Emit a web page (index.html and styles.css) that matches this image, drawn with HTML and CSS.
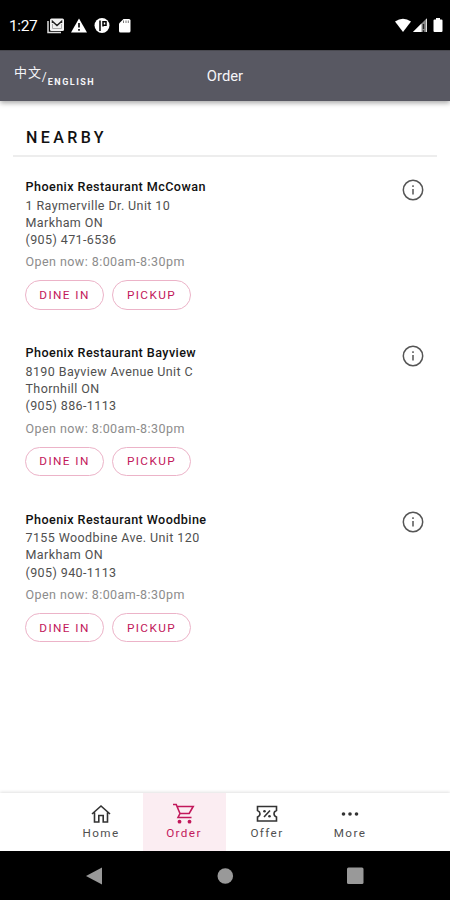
FILE: index.html
```html
<!DOCTYPE html>
<html lang="en">
<head>
    <meta charset="UTF-8">
    <meta name="viewport" content="width=device-width, initial-scale=1.0">
    <title>Order | Phoenix Restaurant</title>
    <link rel="stylesheet" href="styles.css">
</head>
<body>
    <div class="status-bar">
        <span class="clock">1:27</span>
        <svg class="status-left" width="84" height="18" viewBox="0 0 84 18">
            <!-- mail -->
            <path d="M1 4v11.500h13" fill="none" stroke="#ddd" stroke-width="1.500"/>
            <rect x="3" y="1.500" width="14" height="12.500" rx="1.500" fill="#f2f2f2"/>
            <path d="M5.500 6v-1.500L10 8.500l4.500-4V6" fill="none" stroke="#222" stroke-width="1.500"/>
            <path d="M5.500 7v4.500h9V7" fill="none" stroke="#aaa" stroke-width="1"/>
            <!-- warning -->
            <path d="M32 1.500L40 15.500H24z" fill="#fff"/>
            <path d="M32 6v4.500M32 12v1.800" stroke="#000" stroke-width="1.600"/>
            <!-- app -->
            <circle cx="55" cy="8.500" r="7.500" fill="#fff"/>
            <path d="M53 3.500V14M56 9.500V4.800h3v3.400h-3" fill="none" stroke="#000" stroke-width="1.500"/>
            <!-- sd card -->
            <path d="M76.500 2H82q1.500 0 1.500 1.500V14q0 1.500-1.500 1.500h-8.500q-1.500 0-1.500-1.500V6.500z" fill="#fff"/>
            <path d="M76.500 3.500v2.500M79 3.500v2.500M81.300 3.500v2.500" stroke="#777" stroke-width="1"/>
        </svg>
        <svg class="status-right" width="48" height="16" viewBox="0 0 48 16">
            <path d="M0 3.500Q8-2 16 3.500L8 14z" fill="#fff"/>
            <path d="M32 0v14H18z" fill="#888"/>
            <path d="M26.500 5.500V14H18z" fill="#fff"/>
            <path d="M28.500 6v5M28.500 12.300v1.700" stroke="#222" stroke-width="1.400"/>
            <path d="M31.500 1v13" stroke="#ddd" stroke-width="1"/>
            <path d="M41 0h4v1.500h1.500q1 0 1 1V13q0 1-1 1h-7q-1 0-1-1V2.500q0-1 1-1H41z" fill="#fff"/>
        </svg>
    </div>

    <header>
        <a class="lang" href="#"><span class="lang-zh">中文</span><span class="lang-slash">/</span><span class="lang-en">ENGLISH</span></a>
        <h1>Order</h1>
    </header>

    <main>
        <h2>NEARBY</h2>

        <section class="store">
            <div class="store-info">
                <h3>Phoenix Restaurant McCowan</h3>
                <p class="address">1 Raymerville Dr. Unit 10<br>Markham ON<br>(905) 471-6536</p>
                <p class="hours">Open now: 8:00am-8:30pm</p>
                <div class="actions">
                    <button>DINE IN</button>
                    <button>PICKUP</button>
                </div>
            </div>
            <svg class="info" width="22" height="22" viewBox="0 0 22 22">
                <circle cx="11" cy="11" r="9.700"/>
                <path d="M11 10v5.500M11 6.300v1.700"/>
            </svg>
        </section>

        <section class="store">
            <div class="store-info">
                <h3>Phoenix Restaurant Bayview</h3>
                <p class="address">8190 Bayview Avenue Unit C<br>Thornhill ON<br>(905) 886-1113</p>
                <p class="hours">Open now: 8:00am-8:30pm</p>
                <div class="actions">
                    <button>DINE IN</button>
                    <button>PICKUP</button>
                </div>
            </div>
            <svg class="info" width="22" height="22" viewBox="0 0 22 22">
                <circle cx="11" cy="11" r="9.700"/>
                <path d="M11 10v5.500M11 6.300v1.700"/>
            </svg>
        </section>

        <section class="store">
            <div class="store-info">
                <h3>Phoenix Restaurant Woodbine</h3>
                <p class="address">7155 Woodbine Ave. Unit 120<br>Markham ON<br>(905) 940-1113</p>
                <p class="hours">Open now: 8:00am-8:30pm</p>
                <div class="actions">
                    <button>DINE IN</button>
                    <button>PICKUP</button>
                </div>
            </div>
            <svg class="info" width="22" height="22" viewBox="0 0 22 22">
                <circle cx="11" cy="11" r="9.700"/>
                <path d="M11 10v5.500M11 6.300v1.700"/>
            </svg>
        </section>
    </main>

    <nav class="tabs">
        <a class="tab" href="#">
            <svg width="24" height="24" viewBox="0 0 24 24">
                <path d="M3 12L12 4l9 8M5.500 10.500v9.500h4.300v-6.500h4.400v6.500h4.300V10.500"/>
            </svg>
            <span>Home</span>
        </a>
        <a class="tab active" href="#">
            <svg width="24" height="24" viewBox="0 0 24 24">
                <path d="M1 2.500h3.200L8 11.500h9.200l4-7H5.500M8 11.500l-2 4h13.500"/>
                <circle class="solid" cx="7.500" cy="19.700" r="1.900"/>
                <circle class="solid" cx="17.500" cy="19.700" r="1.900"/>
            </svg>
            <span>Order</span>
        </a>
        <a class="tab" href="#">
            <svg width="24" height="24" viewBox="0 0 24 24">
                <path d="M2.500 4.500h19v4q-2.500 1-2.500 3.300t2.500 3.200v4h-19v-4Q5 14 5 11.800T2.500 8.500zM15 8.500l-6 6.500"/>
                <circle class="solid" cx="9.500" cy="9.300" r="1.300"/>
                <circle class="solid" cx="14.500" cy="14.300" r="1.300"/>
            </svg>
            <span>Offer</span>
        </a>
        <a class="tab" href="#">
            <svg width="24" height="24" viewBox="0 0 24 24">
                <circle class="solid" cx="5.500" cy="12" r="1.800"/>
                <circle class="solid" cx="12" cy="12" r="1.800"/>
                <circle class="solid" cx="18.500" cy="12" r="1.800"/>
            </svg>
            <span>More</span>
        </a>
    </nav>

    <div class="system-nav">
        <svg width="18" height="18" viewBox="0 0 18 18"><path d="M0 9L16 .5v17z"/></svg>
        <svg width="18" height="18" viewBox="0 0 18 18"><circle cx="9.300" cy="9" r="7.800"/></svg>
        <svg width="18" height="18" viewBox="0 0 18 18"><rect x="1" y=".5" width="16.500" height="16.500" rx="1.500"/></svg>
    </div>
</body>
</html>
```
FILE: styles.css
```css
:root {
    --header-color: #585862;
    --accent-color: #c2185b;
    --text-color: #505050;
    --light-text: #8c8c8c;
}

* {
    margin: 0;
    padding: 0;
    box-sizing: border-box;
}

body {
    font-family: Roboto, "Noto Sans CJK SC", sans-serif;
    color: var(--text-color);
    background-color: #fff;
    height: 900px;
    display: flex;
    flex-direction: column;
    overflow: hidden;
}

a {
    color: inherit;
    text-decoration: none;
}

.status-bar {
    height: 50px;
    padding: 1px 7px 0 9px;
    background-color: #000;
    color: #fff;
    display: flex;
    align-items: center;
}

.clock {
    width: 38px;
    font-size: 15.5px;
    line-height: 20px;
    letter-spacing: -0.4px;
}

.status-right {
    margin-left: auto;
}

header {
    height: 51px;
    padding: 0 14px 1px;
    background-color: var(--header-color);
    border-top: 1px solid #494950;
    color: #f5f5f8;
    box-shadow: 0 2px 5px rgba(0, 0, 0, 0.35);
    display: grid;
    grid-template-columns: 1fr auto 1fr;
    align-items: center;
}

h1 {
    font-size: 14.8px;
    font-weight: 400;
}

.lang {
    display: flex;
    align-items: center;
    line-height: 14px;
}

.lang-zh {
    font-size: 13px;
    letter-spacing: 0.9px;
    padding-bottom: 6px;
}

.lang-slash {
    font-size: 12px;
    padding: 3px 1px 0 0;
}

.lang-en {
    font-size: 9px;
    font-weight: 700;
    letter-spacing: 1.5px;
    padding-top: 12px;
}

main {
    flex: 1;
    padding: 19px 13px 0;
}

h2 {
    height: 36.5px;
    padding-left: 13px;
    border-bottom: 2px solid #ededed;
    color: #111;
    font-size: 16px;
    font-weight: 500;
    line-height: 36px;
    letter-spacing: 3.4px;
}

.store {
    height: 166.3px;
    padding: 21.5px 13px 0 12.5px;
    display: flex;
    justify-content: space-between;
    align-items: flex-start;
}

h3 {
    color: #111;
    font-size: 12.6px;
    font-weight: 500;
    line-height: 18px;
    letter-spacing: 0.43px;
}

.address {
    margin-top: 0.6px;
    font-size: 12.5px;
    line-height: 17.2px;
    letter-spacing: 0.4px;
}

.hours {
    margin-top: 5px;
    color: var(--light-text);
    font-size: 12.5px;
    line-height: 18px;
    letter-spacing: 0.44px;
}

.actions {
    display: flex;
    gap: 8px;
    margin: 9px 0 0 -0.5px;
}

button {
    width: 79px;
    height: 29.5px;
    border: 1px solid #ecb3c8;
    border-radius: 15px;
    background-color: #fff;
    color: var(--accent-color);
    font-family: inherit;
    font-size: 11.8px;
    letter-spacing: 1.4px;
}

.info {
    margin-top: 0.5px;
    fill: none;
    stroke: #555;
    stroke-width: 1.5;
}

.tabs {
    height: 58px;
    padding-left: 1px;
    background-color: #fff;
    box-shadow: 0 -1px 3px rgba(0, 0, 0, 0.12);
    display: flex;
    justify-content: center;
}

.tab {
    width: 83px;
    padding-top: 9px;
    display: flex;
    flex-direction: column;
    align-items: center;
    font-size: 11.7px;
    line-height: 15px;
    letter-spacing: 1.4px;
}

.tab svg {
    fill: none;
    stroke: #333;
    stroke-width: 1.6;
}

.tab .solid {
    fill: #333;
    stroke: none;
}

.tab.active {
    background-color: #fbedf2;
    color: var(--accent-color);
}

.tab.active svg {
    stroke: var(--accent-color);
}

.tab.active .solid {
    fill: var(--accent-color);
}

.system-nav {
    height: 49px;
    background-color: #000;
    display: flex;
    justify-content: center;
    align-items: center;
    gap: 112px;
}

.system-nav svg {
    fill: #999;
}
```
